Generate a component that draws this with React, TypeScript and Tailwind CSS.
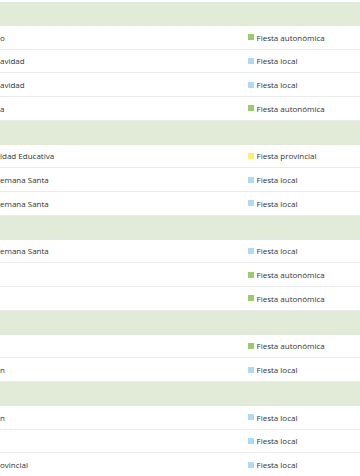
type Kind = 'autonomica' | 'local' | 'provincial';

type Row = { name: string; kind: Kind };

const kinds: Record<Kind, { label: string; swatch: string }> = {
  autonomica: { label: 'Fiesta autonómica', swatch: 'bg-[#9ccb6c]' },
  local: { label: 'Fiesta local', swatch: 'bg-[#aadcf5]' },
  provincial: { label: 'Fiesta provincial', swatch: 'bg-[#f8f26c]' },
};

const sections: Row[][] = [
  [
    { name: 'o', kind: 'autonomica' },
    { name: 'avidad', kind: 'local' },
    { name: 'avidad', kind: 'local' },
    { name: 'a', kind: 'autonomica' },
  ],
  [
    { name: 'idad Educativa', kind: 'provincial' },
    { name: 'emana Santa', kind: 'local' },
    { name: 'emana Santa', kind: 'local' },
  ],
  [
    { name: 'emana Santa', kind: 'local' },
    { name: '', kind: 'autonomica' },
    { name: '', kind: 'autonomica' },
  ],
  [
    { name: '', kind: 'autonomica' },
    { name: 'n', kind: 'local' },
  ],
  [
    { name: 'n', kind: 'local' },
    { name: '', kind: 'local' },
    { name: 'ovincial', kind: 'local' },
  ],
];

function HolidayRow({ row }: { row: Row }) {
  const k = kinds[row.kind];
  return (
    <div className="flex h-[23.75px] items-center border-b border-[#eaeaea] bg-white">
      <div className="flex-1 whitespace-nowrap">{row.name}</div>
      <div className="flex w-[112px] items-center gap-[2.5px]">
        <span className={`inline-block h-[6px] w-[6px] ${k.swatch}`} />
        <span>{k.label}</span>
      </div>
    </div>
  );
}

export default function App() {
  return (
    <div
      className="h-[476px] w-[360px] overflow-hidden bg-white pt-[2px] text-[8px] leading-[11px] text-[#333]"
      style={{ fontFamily: '"Open Sans", "Liberation Sans", sans-serif' }}
    >
      {sections.map((rows, i) => (
        <div key={i}>
          <div className="h-[23.75px] bg-[#e2ebd7]" />
          {rows.map((row, j) => (
            <HolidayRow key={j} row={row} />
          ))}
        </div>
      ))}
    </div>
  );
}
